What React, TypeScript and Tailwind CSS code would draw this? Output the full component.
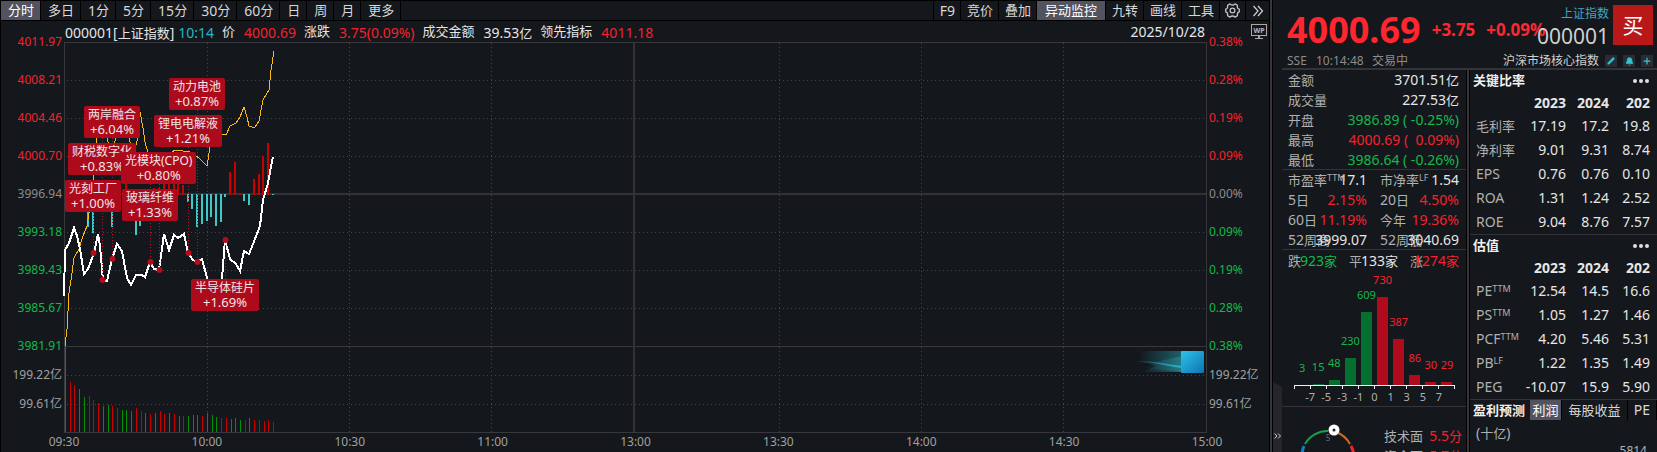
import type { ReactNode } from "react";
import { Bell, Pencil, Plus } from "lucide-react";

const PERIODS = ["分时", "多日", "1分", "5分", "15分", "30分", "60分", "日", "周", "月", "更多"];
const TOOLS = ["F9", "竞价", "叠加", "异动监控", "九转", "画线", "工具"];

const PRICE_TICKS = ["4011.97", "4008.21", "4004.46", "4000.70", "3996.94", "3993.18", "3989.43", "3985.67", "3981.91"];
const PERCENT_TICKS = ["0.38%", "0.28%", "0.19%", "0.09%", "0.00%", "0.09%", "0.19%", "0.28%", "0.38%"];
const TIMES = ["09:30", "10:00", "10:30", "11:00", "13:00", "13:30", "14:00", "14:30", "15:00"];

// plot area in chart units
const PLOT = { x: 64, y: 42, w: 1143, h: 391 };

const PRICE_LINE =
  "64,296 65,250 69,243 74,228 77,236 80,249 84,274 88,269 94,253 98,234 100,246 103,280 107,281 112,259 117,244 122,251 127,278 131,285 136,275 142,275 145,277 150,262 154,269 159,270 164,234 169,250 174,235 178,238 184,234 188,253 193,260 197,262 202,259 207,278 210,292 218,292 222,279 225,240 230,259 236,264 240,271 244,251 249,254 255,239 260,226 263,200 268,183 270,172 273,157";
const LEAD_LINE =
  "65,346 67,329 69,293 72,273 74,258 79,249 83,236 87,226 89,213 93,190 94,170 97,138 101,120 107,138 111,155 116,138 122,120 129,137 133,155 138,138 140,112 143,128 145,142 148,153 155,165 175,150 190,152 199,158 202,161 207,166 210,147 215,132 222,134 226,135 230,126 236,123 240,117 244,107 247,117 249,126 252,127 255,127 259,121 263,100 269,90 271,70 274,51";

// [x, offset from the zero line], positive goes up
const FLOW: [number, number][] = [
  [88, -33], [93, -39], [112, -33], [126, 11], [136, -41], [140, -32], [150, 6], [154, 7], [159, 7],
  [164, 12], [169, 12], [174, 12], [178, 12], [183, 10], [188, -8], [192, -15], [197, -33], [202, -30],
  [207, -27], [211, -23], [216, -32], [221, -28], [225, -3], [230, 23], [235, 33], [240, 2], [244, -7],
  [249, -11], [254, 16], [259, 21], [263, 39], [268, 52], [273, -1],
];

// one bar a minute, "r" for up and "g" for down
const VOLUMES =
  "g86 r50 r47 g43 g35 r36 r32 r29 g26 g27 r26 r24 g22 g22 g21 r24 r21 g19 r18 g19 r21 r18 g19 r18 g16 r16 g16 g17 g17 r16 g19 g17 g15 r14 r14 g13 g14 g12 r12 g14 r12 r12 r11 r12 r10"
    .split(" ")
    .map((v) => ({ up: v[0] === "r", h: Number(v.slice(1)) }));

// [x, y of the dot, y where the guide starts]
const EVENTS: [number, number, number][] = [
  [93, 253, 212], [102, 280, 138], [112, 259, 138], [150, 262, 184],
  [159, 270, 184], [188, 253, 147], [197, 262, 110], [225, 240, 279],
];

const TAGS = [
  { x: 169, y: 78, name: "动力电池", value: "+0.87%" },
  { x: 84, y: 106, name: "两岸融合", value: "+6.04%" },
  { x: 154, y: 115, name: "锂电电解液", value: "+1.21%" },
  { x: 68, y: 143, name: "财税数字化", value: "+0.83%" },
  { x: 121, y: 152, name: "光模块(CPO)", value: "+0.80%" },
  { x: 65, y: 180, name: "光刻工厂", value: "+1.00%" },
  { x: 122, y: 189, name: "玻璃纤维", value: "+1.33%" },
  { x: 191, y: 279, name: "半导体硅片", value: "+1.69%" },
];

const SPREAD = [
  { n: 3, h: 0, up: false },
  { n: 15, h: 1, up: false },
  { n: 48, h: 5, up: false },
  { n: 230, h: 27, up: false },
  { n: 609, h: 73, up: false },
  { n: 730, h: 88, up: true },
  { n: 387, h: 46, up: true },
  { n: 86, h: 10, up: true },
  { n: 30, h: 3, up: true },
  { n: 29, h: 3, up: true },
];

const RATIOS = [
  ["毛利率", "", "17.19", "17.2", "19.8"],
  ["净利率", "", "9.01", "9.31", "8.74"],
  ["EPS", "", "0.76", "0.76", "0.10"],
  ["ROA", "", "1.31", "1.24", "2.52"],
  ["ROE", "", "9.04", "8.76", "7.57"],
];
const VALUATION = [
  ["PE", "TTM", "12.54", "14.5", "16.6"],
  ["PS", "TTM", "1.05", "1.27", "1.46"],
  ["PCF", "TTM", "4.20", "5.46", "5.31"],
  ["PB", "LF", "1.22", "1.35", "1.49"],
  ["PEG", "", "-10.07", "15.9", "5.90"],
];

// Latin runs sit one step larger than the Chinese around them
function Mixed({ text }: { text: string }) {
  return (
    <>
      {text.split(/([\x20-\x7e]+)/).map((part, i) => (
        <span key={i} className={i % 2 ? "text-[14px]" : "text-[13px]"}>
          {part}
        </span>
      ))}
    </>
  );
}

function Toolbar() {
  return (
    <div className="flex h-[21px] border-y border-black">
      {PERIODS.map((p, i) => (
        <button
          key={p}
          type="button"
          className={[
            "flex items-center border-r border-black pr-[6px] pl-[7px] leading-none whitespace-pre",
            i === 0 ? "bg-[#53535f] text-white" : "text-[#d8d8d8]",
          ].join(" ")}
        >
          <Mixed text={p} />
        </button>
      ))}
      <div className="flex-1 border-r border-black" />
      {TOOLS.map((t) => (
        <button
          key={t}
          type="button"
          className={[
            "flex items-center justify-center border-r border-black leading-none whitespace-pre",
            t === "异动监控" ? "bg-[#53535f] px-[8px] text-white" : "pr-[5px] pl-[6px] text-[#d8d8d8]",
          ].join(" ")}
        >
          <Mixed text={t} />
        </button>
      ))}
      <button type="button" aria-label="设置" className="flex w-[26px] items-center justify-center border-r border-black">
        <svg width="15" height="15" viewBox="0 0 15 15" fill="none" stroke="#c4c4c4" strokeWidth="1.3" strokeLinejoin="round">
          <path d="M4.9 .9 Q7.5 3.1 10.1 .9 L12.4 2.3 Q11.8 5.6 14.3 6.2 V8.8 Q11.8 9.4 12.4 12.7 L10.1 14.1 Q7.5 11.9 4.9 14.1 L2.6 12.7 Q3.2 9.4 .7 8.8 V6.2 Q3.2 5.6 2.6 2.3Z" />
          <circle cx="7.5" cy="7.5" r="2.4" />
        </svg>
      </button>
      <button type="button" aria-label="展开" className="flex w-[23px] items-center justify-center">
        <svg width="12" height="12" viewBox="0 0 12 12" fill="none" stroke="#d0d0d0" strokeWidth="1.2">
          <path d="M1.5 1 L6 6 L1.5 11 M6 1 L10.5 6 L6 11" />
        </svg>
      </button>
    </div>
  );
}

function tickColor(i: number) {
  if (i < 4) return "text-[#f5222d]";
  return i === 4 ? "text-[#8c8c8c]" : "text-[#14b84b]";
}

function Axis({ ticks }: { ticks: string[] }) {
  return (
    <div className="pt-[2px] text-[12px]">
      {ticks.map((t, i) => (
        <div key={i} className={["h-[38px] leading-[38px]", tickColor(i)].join(" ")}>
          {t}
        </div>
      ))}
      <div className="h-[20px] leading-[20px] text-[#a0a0a0]">199.22亿</div>
      <div className="h-[38px] leading-[38px] text-[#a0a0a0]">99.61亿</div>
    </div>
  );
}

function PlotSvg() {
  const rows = [80, 118, 156, 232, 270, 308, 375, 404];
  const cols = [207, 349, 491, 779, 921, 1063];
  return (
    <svg
      className="absolute inset-0 h-full w-full overflow-visible"
      viewBox={`${PLOT.x} ${PLOT.y} ${PLOT.w} ${PLOT.h}`}
      preserveAspectRatio="none"
    >
      <g stroke="#45464b" strokeDasharray="1 3" shapeRendering="crispEdges">
        {rows.map((y) => (
          <line key={y} x1="67" x2="1206" y1={y + 0.5} y2={y + 0.5} />
        ))}
        {cols.map((x) => (
          <line key={x} x1={x + 0.5} x2={x + 0.5} y1="43" y2="432" />
        ))}
      </g>
      <g fill="none" stroke="#38383c" shapeRendering="crispEdges">
        <rect x="64.5" y="42.5" width="1142" height="390" />
        <line x1="65" x2="1206" y1="346.5" y2="346.5" />
        <line x1="65" x2="1206" y1="194" y2="194" strokeWidth="2" stroke="#333136" />
        <line x1="634" x2="634" y1="43" y2="432" strokeWidth="2" stroke="#333136" />
      </g>

      <g shapeRendering="crispEdges">
        {VOLUMES.map((v, i) => (
          <rect
            key={i}
            x={Math.round(65 + i * 4.73)}
            y={432 - v.h}
            width="1"
            height={v.h}
            fill={v.up ? "#c80000" : "#009000"}
          />
        ))}
        {FLOW.map(([x, d]) => (
          <rect
            key={x}
            x={x - 1}
            y={d > 0 ? 195 - d : 194}
            width="2"
            height={Math.abs(d)}
            fill={d > 0 ? "#c80000" : "#40c8c8"}
          />
        ))}
      </g>

      <polyline points={LEAD_LINE} fill="none" stroke="#fcb813" shapeRendering="crispEdges" />
      <polyline points={PRICE_LINE} fill="none" stroke="#fff" strokeWidth="2" shapeRendering="crispEdges" />

      {EVENTS.map(([x, y, from]) => (
        <g key={x}>
          <line
            x1={x + 0.5}
            x2={x + 0.5}
            y1={from}
            y2={y}
            stroke="#c01024"
            strokeDasharray="1 2"
            shapeRendering="crispEdges"
          />
          <circle cx={x + 0.5} cy={y} r="3" fill="#b30c1e" />
        </g>
      ))}

      <defs>
        <linearGradient id="trail" x1="0" x2="1">
          <stop offset="0" stopColor="#2bb8d0" stopOpacity="0" />
          <stop offset="1" stopColor="#2bb8c4" stopOpacity=".65" />
        </linearGradient>
        <linearGradient id="streak" x1="0" x2="1">
          <stop offset="0" stopColor="#25b4d8" stopOpacity=".1" />
          <stop offset="1" stopColor="#25b4d8" />
        </linearGradient>
        <linearGradient id="cube" x1="0" y1="0" x2="1" y2="1">
          <stop offset="0" stopColor="#2cc4ea" />
          <stop offset=".5" stopColor="#1d9bcf" />
          <stop offset="1" stopColor="#0e73b4" />
        </linearGradient>
      </defs>
      <path d="M1139 351 H1182 V372 H1142 L1156 366 L1139 361Z" fill="url(#trail)" opacity=".7" />
      <path d="M1138 361 C1154 361 1166 364 1182 366 V368 C1166 366 1154 362 1138 362Z" fill="url(#streak)" />
      <path d="M1142 368 L1160 361 L1182 356 V372Z" fill="url(#trail)" opacity=".5" />
      <rect x="1181" y="351" width="23" height="22" rx="1" fill="url(#cube)" />
    </svg>
  );
}

function Info({ label, value, tone = "" }: { label: string; value: string; tone?: string }) {
  return (
    <div className="flex flex-none items-center gap-[9px]">
      <span className="text-[13px]">{label}</span>
      <span className={tone}>
        <Mixed text={value} />
      </span>
    </div>
  );
}

function Chart() {
  return (
    <div className="grid grid-cols-[63px_minmax(0,1fr)_62px]">
      <div className="pr-[2px] text-right">
        <Axis ticks={PRICE_TICKS} />
      </div>
      <div className="min-w-0">
        <div className="flex h-[21px] items-center gap-[8px] pl-px leading-none whitespace-nowrap text-[#e6e6e6]">
          <div className="flex flex-none gap-[4px]">
            <div>
              <Mixed text="000001[上证指数]" />
            </div>
            <div className="text-[#22b8c8]">
              <Mixed text="10:14" />
            </div>
          </div>
          <Info label="价" value="4000.69" tone="text-[#f5222d]" />
          <Info label="涨跌" value="3.75(0.09%)" tone="text-[#f5222d]" />
          <Info label="成交金额" value="39.53亿" />
          <Info label="领先指标" value="4011.18" tone="text-[#f5222d]" />
          <div className="ml-auto pr-[2px] text-[14px]">2025/10/28</div>
        </div>
        <div className="relative h-[391px]">
          <PlotSvg />
          {TAGS.map((t) => (
            <div
              key={t.name}
              className="absolute h-[32px] rounded-[2px] bg-[#ad0a1b] px-[4px] pt-[2px] text-center leading-[14px] whitespace-nowrap text-[#f0e4e6]"
              style={{ left: `${((t.x - PLOT.x) / PLOT.w) * 100}%`, top: t.y - PLOT.y }}
            >
              <div className="text-[12px]">{t.name}</div>
              <div className="text-[13px]">{t.value}</div>
            </div>
          ))}
        </div>
        <div className="flex h-[17px] justify-between text-[12px] leading-[17px] text-[#a0a0a0]">
          {TIMES.map((t) => (
            <div key={t} className="flex w-0 justify-center whitespace-nowrap">
              {t}
            </div>
          ))}
        </div>
      </div>
      <div className="flex justify-between pl-[2px]">
        <div className="w-[42px] whitespace-nowrap">
          <Axis ticks={PERCENT_TICKS} />
        </div>
        <svg className="mt-[3px] mr-[2px] flex-none" width="16" height="16" viewBox="0 0 16 16">
          <rect x=".5" y=".5" width="15" height="11" fill="none" stroke="#a8a8a8" />
          <text x="8" y="9" textAnchor="middle" fontSize="7" fontWeight="700" fill="#b8b8b8">
            WP
          </text>
          <path d="M7 12h2v2h3v1H4v-1h3z" fill="#a8a8a8" />
        </svg>
      </div>
    </div>
  );
}

function IconButton({ label, children }: { label: string; children: ReactNode }) {
  return (
    <button type="button" aria-label={label} className="flex size-[12px] items-center justify-center bg-[#2b2c33] text-[#35c2d6]">
      {children}
    </button>
  );
}

function QuoteHeader() {
  return (
    <header className="h-[68px] pr-[4px] pl-[14px]">
      <div className="flex h-[54px] pt-[5px]">
        <div className="flex min-w-0 flex-1 items-center gap-[11px] font-bold whitespace-nowrap text-[#ff262f]">
          <div className="text-[36px] leading-[48px]">4000.69</div>
          <div className="text-[17px] leading-[48px]">+3.75</div>
          <div className="text-[17px] leading-[48px]">+0.09%</div>
        </div>
        <div className="pr-[4px] text-right">
          <div className="text-[12px] leading-[17px] text-[#46a4c0]">上证指数</div>
          <div className="text-[21px] leading-[29px] text-[#d0d0d0]">000001</div>
        </div>
        <button type="button" className="size-[40px] flex-none bg-[#b91818] text-[21px] leading-[40px] text-white">
          买
        </button>
      </div>
      <div className="flex h-[14px] items-center text-[12px] leading-[14px] whitespace-nowrap text-[#8c8c8c]">
        <div className="w-[29px]">SSE</div>
        <div className="w-[56px]">10:14:48</div>
        <div>交易中</div>
        <div className="mr-[6px] ml-auto text-[#d0d0d0]">沪深市场核心指数</div>
        <div className="flex gap-[6px]">
          <IconButton label="编辑">
            <Pencil size={8} fill="currentColor" />
          </IconButton>
          <IconButton label="提醒">
            <Bell size={9} fill="currentColor" />
          </IconButton>
          <IconButton label="添加">
            <Plus size={10} strokeWidth={3} />
          </IconButton>
        </div>
      </div>
    </header>
  );
}

function Row({ label, value, tone = "text-[#e6e6e6]" }: { label: string; value: string; tone?: string }) {
  return (
    <div className="flex h-[20px] items-center justify-between leading-none whitespace-nowrap">
      <span className="text-[13px] text-[#b0b0b0]">{label}</span>
      <span className={["text-[14px] whitespace-pre", tone].join(" ")}>
        <Mixed text={value} />
      </span>
    </div>
  );
}

// value is kept whole; a long label runs underneath it
function Cell({ label, sup, value, tone = "text-[#e6e6e6]" }: { label: string; sup?: string; value: string; tone?: string }) {
  return (
    <div className="flex h-[20px] items-center leading-none whitespace-nowrap">
      <span className="w-0 flex-1 text-[14px] text-[#b0b0b0]">
        <Mixed text={label} />
        {sup && <sup className="text-[9px]">{sup}</sup>}
      </span>
      <span className={["text-[14px]", tone].join(" ")}>{value}</span>
    </div>
  );
}

function Count({ label, value, tone }: { label: string; value: string; tone: string }) {
  return (
    <div className="flex w-[49px] items-center text-[14px]">
      <span className="w-0 flex-1">
        <Mixed text={label} />
      </span>
      <span className={tone}>
        <Mixed text={value} />
      </span>
    </div>
  );
}

function Spread() {
  return (
    <div className="mr-[11px] ml-[12px]">
      <div className="grid h-[114px] w-full grid-cols-10 items-end">
        {SPREAD.map((b) => (
          <div key={b.n} className="flex flex-col items-center">
            <span
              className={[
                "mb-[10px] flex w-0 justify-center text-[11px] leading-[14px]",
                b.up ? "text-[#f5222d]" : "text-[#14b84b]",
              ].join(" ")}
            >
              {b.n}
            </span>
            <div className={["w-[11px]", b.up ? "bg-[#b00a1c]" : "bg-[#04702f]"].join(" ")} style={{ height: b.h }} />
          </div>
        ))}
      </div>
      <svg className="block h-[4px] w-full" viewBox="0 0 161 4" preserveAspectRatio="none" shapeRendering="crispEdges">
        <path
          d="M0 .5H161M.5 0V4M16.5 0V4M32.5 0V4M48.5 0V4M64.5 0V4M80.5 0V4M96.5 0V4M112.5 0V4M128.5 0V4M144.5 0V4M160.5 0V4"
          stroke="#f0f0f0"
        />
      </svg>
      <div className="mx-[8px] grid grid-cols-9 pt-px text-[11px] leading-[14px] text-[#b0b0b0]">
        {["-7", "-5", "-3", "-1", "0", "1", "3", "5", "7"].map((t) => (
          <span key={t} className="text-center">
            {t}
          </span>
        ))}
      </div>
    </div>
  );
}

function QuotePanel() {
  return (
    <div className="w-[184px] flex-none">
      <div className="h-[100px] border-b border-[#333338] pr-[7px] pl-[6px]">
        <Row label="金额" value="3701.51亿" />
        <Row label="成交量" value="227.53亿" />
        <Row label="开盘" value="3986.89 ( -0.25%)" tone="text-[#14b84b]" />
        <Row label="最高" value="4000.69 (  0.09%)" tone="text-[#f5222d]" />
        <Row label="最低" value="3986.64 ( -0.26%)" tone="text-[#14b84b]" />
      </div>
      <div className="grid h-[80px] grid-cols-[79px_79px] gap-x-[13px] border-b border-[#333338] pl-[6px]">
        <Cell label="市盈率" sup="TTM" value="17.1" />
        <Cell label="市净率" sup="LF" value="1.54" />
        <Cell label="5日" value="2.15%" tone="text-[#f5222d]" />
        <Cell label="20日" value="4.50%" tone="text-[#f5222d]" />
        <Cell label="60日" value="11.19%" tone="text-[#f5222d]" />
        <Cell label="今年" value="19.36%" tone="text-[#f5222d]" />
        <Cell label="52周高" value="3999.07" />
        <Cell label="52周低" value="3040.69" />
      </div>
      <div className="flex h-[21px] items-center justify-between pr-[7px] pl-[6px] leading-none whitespace-nowrap text-[#b0b0b0]">
        <Count label="跌" value="923家" tone="text-[#14b84b]" />
        <Count label="平" value="133家" tone="text-[#e6e6e6]" />
        <Count label="涨" value="1274家" tone="text-[#f5222d]" />
      </div>
      <Spread />
      <div className="mt-[2px] flex border-t border-[#333338] pt-[19px]">
        <svg className="ml-[19px] flex-none overflow-visible" width="56" height="56" viewBox="0 0 56 56" fill="none" strokeWidth="2">
          <path d="M4 18 A26 26 0 0 1 27 5" stroke="#18a04c" />
          <path d="M35 6 A26 26 0 0 1 49 18" stroke="#c8701c" />
          <path d="M50 20 A26 26 0 0 1 53 31" stroke="#f5222d" strokeWidth="3" />
          <path d="M1 31 A26 26 0 0 1 3 20" stroke="#1480c8" strokeWidth="3" />
          <text x="27" y="15" textAnchor="middle" fontSize="8" fill="#707070">
            5
          </text>
          <circle cx="33" cy="4" r="3.5" fill="#222" stroke="#fff" strokeWidth="4" />
        </svg>
        <div className="mr-[4px] ml-auto w-[78px] flex-none">
          <Row label="技术面" value="5.5分" tone="text-[#f5222d]" />
          <Row label="资金面" value="5.7分" tone="text-[#f5222d]" />
        </div>
      </div>
    </div>
  );
}

function RatioTable({ title, rows }: { title: string; rows: string[][] }) {
  return (
    <section className="border-b border-[#333338]">
      <div className="flex h-[21px] items-center justify-between pr-[8px] pl-[3px]">
        <h2 className="text-[13px] leading-none font-bold text-[#f0f0f0]">{title}</h2>
        <button type="button" aria-label="更多" className="flex gap-[2px]">
          <i className="size-[4px] rounded-full bg-[#e0e0e0]" />
          <i className="size-[4px] rounded-full bg-[#e0e0e0]" />
          <i className="size-[4px] rounded-full bg-[#e0e0e0]" />
        </button>
      </div>
      <table className="w-full table-fixed text-right text-[14px] leading-none text-[#e6e6e6]">
        <thead>
          <tr className="h-[23px] font-bold">
            <th />
            <th className="w-[48px]">2023</th>
            <th className="w-[43px]">2024</th>
            <th className="w-[48px] pr-[7px]">202</th>
          </tr>
        </thead>
        <tbody>
          {rows.map(([name, sup, a, b, c]) => (
            <tr key={name} className="h-[24px]">
              <th className="pl-[6px] text-left font-normal whitespace-nowrap text-[#b0b0b0]">
                <Mixed text={name} />
                {sup && <sup className="text-[9px]">{sup}</sup>}
              </th>
              <td>{a}</td>
              <td>{b}</td>
              <td className="pr-[7px]">{c}</td>
            </tr>
          ))}
        </tbody>
      </table>
    </section>
  );
}

function RatioPanel() {
  return (
    <div className="min-w-0 flex-1">
      <RatioTable title="关键比率" rows={RATIOS} />
      <RatioTable title="估值" rows={VALUATION} />
      <div className="flex h-[20px] text-[13px] leading-none whitespace-nowrap text-[#d8d8d8]">
        <h2 className="flex w-[60px] items-center pl-[3px] font-bold text-[#f0f0f0]">盈利预测</h2>
        <button type="button" className="w-[32px] border-r border-black bg-[#53535f] text-white">
          利润
        </button>
        <button type="button" className="w-[66px] border-r border-black">
          每股收益
        </button>
        <button type="button" className="flex-1 border-r border-black text-[14px]">
          PE
        </button>
      </div>
      <div className="pl-[6px] leading-[24px] text-[#b0b0b0]">
        <Mixed text="(十亿)" />
      </div>
      <div className="pr-[10px] text-right text-[12px] leading-[12px] text-[#b0b0b0]">5814</div>
    </div>
  );
}

export default function App() {
  return (
    <main className="flex h-screen overflow-hidden bg-[#14171c] font-['Noto_Sans','Noto_Sans_CJK_SC',sans-serif]">
      <div className="min-w-0 flex-1 border-x border-black">
        <Toolbar />
        <Chart />
      </div>
      <aside className="flex w-[387px] flex-none flex-col border-l-2 border-[#38363a]">
        <div className="flex min-h-0 flex-1 flex-col border-l border-black">
          <QuoteHeader />
          <div className="flex min-h-0 flex-1">
            <div className="flex w-[9px] flex-none flex-col justify-end">
              <button type="button" aria-label="收起" className="h-[70px] w-[9px]">
                <svg width="9" height="70" viewBox="0 0 9 70">
                  <path d="M0 0 L9 5 V70 H0Z" fill="#26252b" />
                  <path d="M1.5 51.5 L4 54 L1.5 56.5 M5 51.5 L7.5 54 L5 56.5" fill="none" stroke="#d0d0d0" />
                </svg>
              </button>
            </div>
            <div className="flex min-w-0 flex-1 border-t-2 border-[#333338]">
              <QuotePanel />
              <div className="w-[4px] flex-none border-x border-black bg-[#38363a]" />
              <RatioPanel />
            </div>
          </div>
        </div>
      </aside>
    </main>
  );
}
